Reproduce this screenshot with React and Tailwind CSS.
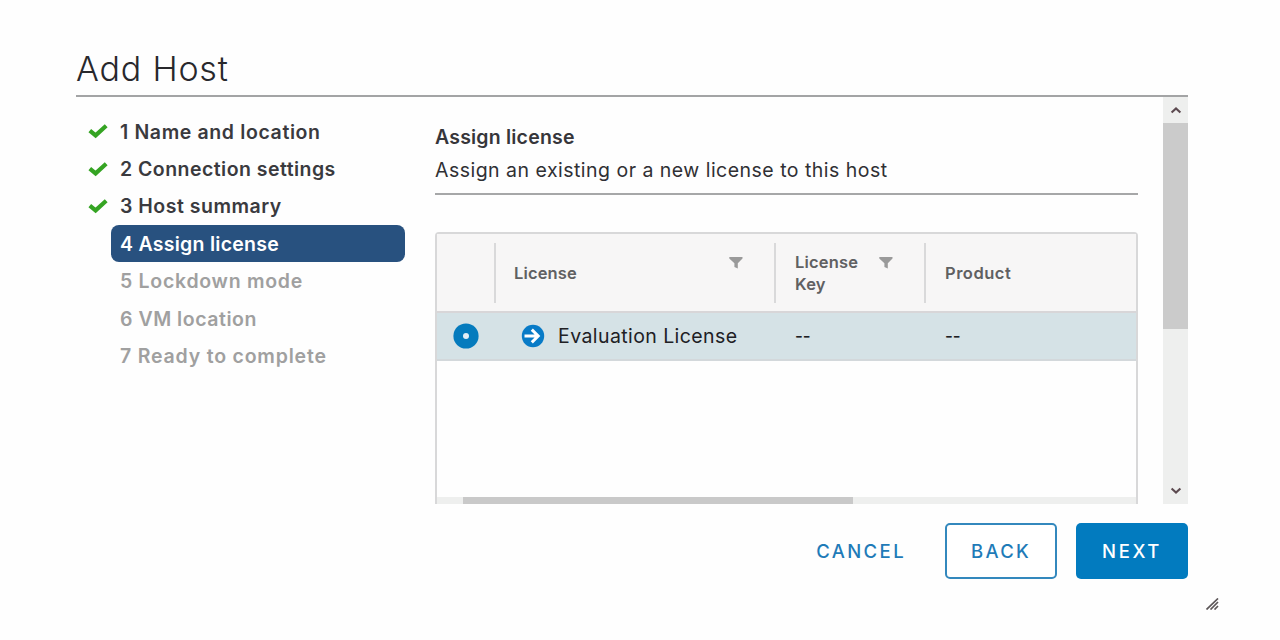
import React from "react";

const steps = [
  { label: "1 Name and location", state: "done", tracking: "tracking-[0.62px]" },
  { label: "2 Connection settings", state: "done", tracking: "tracking-[0.46px]" },
  { label: "3 Host summary", state: "done", tracking: "tracking-[0.5px]" },
  { label: "4 Assign license", state: "active", tracking: "tracking-[0.27px]" },
  { label: "5 Lockdown mode", state: "todo", tracking: "tracking-[0.72px]" },
  { label: "6 VM location", state: "todo", tracking: "tracking-[0.53px]" },
  { label: "7 Ready to complete", state: "todo", tracking: "tracking-[0.8px]" },
];

const stepStyles = {
  done: "text-[#3a3a3e]",
  active: "bg-[#28517f] text-white",
  todo: "text-[#a0a0a0]",
};

function Check() {
  return (
    <svg width="20" height="16" viewBox="0 0 20 16" className="block">
      <path d="M1.8 7.6L7.6 12.4L18.2 2.8" fill="none" stroke="#35a423" strokeWidth="4.2" />
    </svg>
  );
}

function Filter() {
  return (
    <svg width="14" height="12" viewBox="0 0 14 12" className="block">
      <path d="M0.3 0H13.5V1.6L8.8 6.2V11.6L5.4 10V6.2L0.3 1.6Z" fill="#9a9a9a" />
    </svg>
  );
}

function Chevron({ down }) {
  return (
    <svg width="12" height="8" viewBox="0 0 12 8" className="block">
      <path d={down ? "M1.6 1.5L6 5.6L10.4 1.5" : "M1.6 6.5L6 2.4L10.4 6.5"} fill="none" stroke="#5c4a50" strokeWidth="2.1" />
    </svg>
  );
}

function Steps() {
  return (
    <nav className="w-[359px] shrink-0 pt-[15.5px]">
      {steps.map((s) => (
        <div key={s.label} className="flex h-[37.4px] items-center">
          <span className="flex w-[35px] shrink-0 justify-start pl-3">{s.state === "done" && <Check />}</span>
          <div className={`flex h-full w-[294px] items-center rounded-lg pt-[2px] pl-[9px] text-[19.5px] font-semibold ${stepStyles[s.state]}`}>
            <span className={`whitespace-nowrap ${s.tracking}`}>{s.label}</span>
          </div>
        </div>
      ))}
    </nav>
  );
}

function LicenseGrid() {
  return (
    <div className="mt-[37px] flex h-[273px] w-[703px] flex-col rounded-t border-2 border-b-0 border-[#d8d8d9]">
      <div className="flex h-[79px] shrink-0 items-center border-b-2 border-[#d8d6d8] bg-[#f7f6f6] text-[16.5px] leading-[22px] font-semibold text-[#606062]">
        <div className="h-[60px] w-[59px] border-r-2 border-[#d9d9da]" />
        <div className="flex h-[60px] w-[280px] items-center border-r-2 border-[#d9d9da] pl-[18px]">
          <span className="w-[215px] tracking-[0.15px]">License</span>
          <span className="-mt-[19px]"><Filter /></span>
        </div>
        <div className="flex h-[60px] w-[150px] items-center border-r-2 border-[#d9d9da] pl-[19px]">
          <span className="w-[84px] tracking-[0.2px]">License<br />Key</span>
          <span className="-mt-[19px]"><Filter /></span>
        </div>
        <span className="pl-[19px] tracking-[0.5px]">Product</span>
      </div>
      <div className="flex h-[48px] shrink-0 items-center border-b-2 border-[#d3d8db] bg-[#d5e2e6] text-[19.5px] text-[#202024]">
        <div className="w-[59px] pb-px pl-4">
          <svg width="26" height="26" viewBox="0 0 26 26" className="block">
            <circle cx="13" cy="13" r="12.6" fill="#057bbd" />
            <circle cx="13" cy="13" r="3" fill="#e4eef5" />
          </svg>
        </div>
        <div className="flex w-[280px] items-center pl-[25px]">
          <svg width="24" height="24" viewBox="0 0 24 24" className="block">
            <circle cx="12" cy="12" r="11.2" fill="#087bc7" />
            <path d="M3.5 12H17M10.8 5.6L17.2 12L10.8 18.4" fill="none" stroke="#fff" strokeWidth="3" />
          </svg>
          <span className="pt-px pl-[13px] tracking-[0.42px] whitespace-nowrap">Evaluation License</span>
        </div>
        <div className="w-[150px] pt-[2px] pl-[19px] text-[17px] font-medium">--</div>
        <div className="pt-[2px] pl-[19px] text-[17px] font-medium">--</div>
      </div>
      <div className="flex-1" />
      <div className="h-2 shrink-0 bg-[#eeefee] pl-[26px]">
        <div className="h-full w-[390px] bg-[#c9c9c9]" />
      </div>
    </div>
  );
}

export default function App() {
  return (
    <div className="flex h-[640px] w-[1280px] flex-col bg-[#fefefe] pl-[76px] font-['Inter','Liberation_Sans',sans-serif]">
      <header className="h-[97px] w-[1112px] shrink-0 border-b-2 border-[#a3a4a5] pt-[47px]">
        <h1 className="text-[34px] leading-[44px] font-light tracking-[0.8px] text-[#28282c]">Add Host</h1>
      </header>
      <div className="flex h-[407px] w-[1112px] shrink-0 overflow-hidden">
        <Steps />
        <main className="w-[728px] shrink-0 pt-[26px]">
          <h2 className="text-[19.5px] leading-[28px] font-semibold tracking-[0.2px] text-[#36363a]">Assign license</h2>
          <p className="mt-[5px] h-[39px] w-[703px] border-b-2 border-[#a6a7a8] text-[19.5px] leading-[28px] tracking-[0.48px] whitespace-nowrap text-[#303034]">Assign an existing or a new license to this host</p>
          <LicenseGrid />
        </main>
        <div className="flex w-[25px] shrink-0 flex-col items-center bg-[#eeefee]">
          <div className="flex h-[26px] items-center"><Chevron /></div>
          <div className="h-[206px] w-full bg-[#cbcbcb]" />
          <div className="flex-1" />
          <div className="flex h-[27px] items-center"><Chevron down /></div>
        </div>
      </div>
      <footer className="mt-[19px] flex h-[56px] w-[1112px] shrink-0 items-center justify-end text-[18.5px] font-medium text-[#1f7bb8]">
        <button className="mr-[39px] pt-px tracking-[2.4px]">CANCEL</button>
        <button className="mr-[19px] h-[56px] w-[112px] rounded-[5px] border-2 border-[#3388bd] bg-white pt-[2px] tracking-[2.3px]">BACK</button>
        <button className="h-[56px] w-[112px] rounded-[5px] bg-[#027bbf] pt-[2px] tracking-[2.6px] text-white">NEXT</button>
      </footer>
      <svg width="13" height="12" viewBox="0 0 13 12" className="mt-[19px] ml-[1130px] block">
        <path d="M0.5 11.5L12 0.5M4.5 11.5L12 4M8.5 11.5L12 8" fill="none" stroke="#5c5658" strokeWidth="1.7" />
      </svg>
    </div>
  );
}
